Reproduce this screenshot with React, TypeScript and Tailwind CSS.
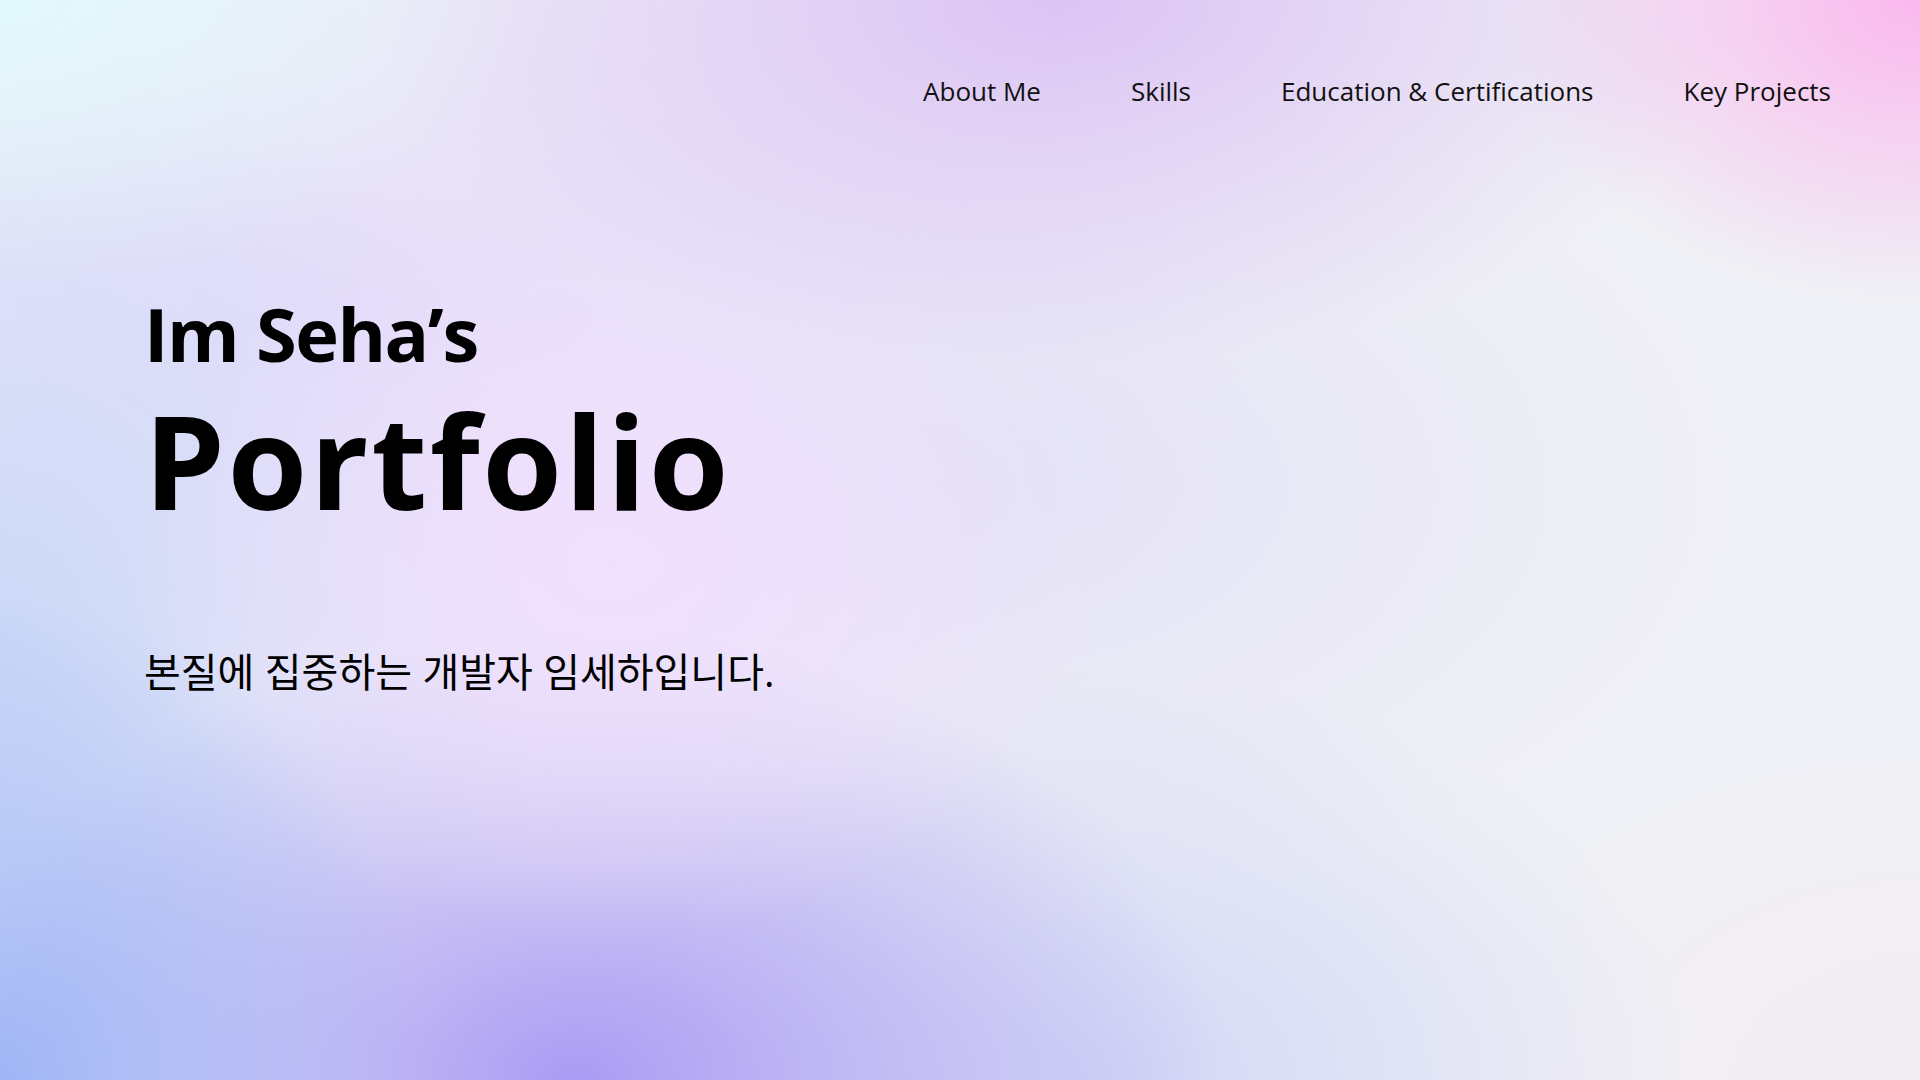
const links = ["About Me", "Skills", "Education & Certifications", "Key Projects"];

function App() {
  return (
    <div
      className="w-full h-[1080px] overflow-hidden flex flex-col text-black font-['Open_Sans','Noto_Sans_CJK_KR',sans-serif] bg-[#eff0f5] bg-[radial-gradient(ellipse_28%_26%_at_0%_0%,#e2f9fb_0%,transparent_100%),radial-gradient(ellipse_22%_28%_at_100%_0%,#fbb8ee_0%,transparent_100%),radial-gradient(ellipse_36%_34%_at_55%_0%,#dcc3f5_0%,transparent_100%),radial-gradient(ellipse_25%_35%_at_32%_52%,#f1dffe_0%,transparent_100%),radial-gradient(ellipse_22%_45%_at_0%_100%,#9fb5f6_0%,transparent_100%),radial-gradient(ellipse_34%_42%_at_30%_100%,#aa9bf4_0%,transparent_100%),radial-gradient(ellipse_30%_38%_at_58%_100%,#d2d8f6_0%,transparent_100%),radial-gradient(ellipse_28%_60%_at_0%_60%,#cbd8f8_0%,transparent_100%),radial-gradient(ellipse_40%_40%_at_50%_45%,#e4e2f7_0%,transparent_100%),radial-gradient(ellipse_45%_45%_at_20%_30%,#e6dcfa_0%,transparent_100%),radial-gradient(ellipse_25%_30%_at_100%_100%,#f3ecf3_0%,transparent_100%)]"
    >
      {/* Nav */}
      <nav className="flex justify-end gap-[90px] pt-[78px] pr-[89px]">
        {links.map((l) => (
          <a key={l} href="#" className="text-[26px] leading-none text-[#111] no-underline">
            {l}
          </a>
        ))}
      </nav>

      {/* Hero */}
      <main className="flex flex-col pl-[144px] mt-[193px]">
        <h2 className="text-[74px] leading-none font-bold tracking-[-0.02em]">Im Seha’s</h2>
        <h1 className="mt-[25px] text-[129px] leading-none font-bold tracking-[0.02em]">Portfolio</h1>
        <p className="mt-[127px] text-[40px] leading-none">본질에 집중하는 개발자 임세하입니다.</p>
      </main>
    </div>
  );
}

export default App;
